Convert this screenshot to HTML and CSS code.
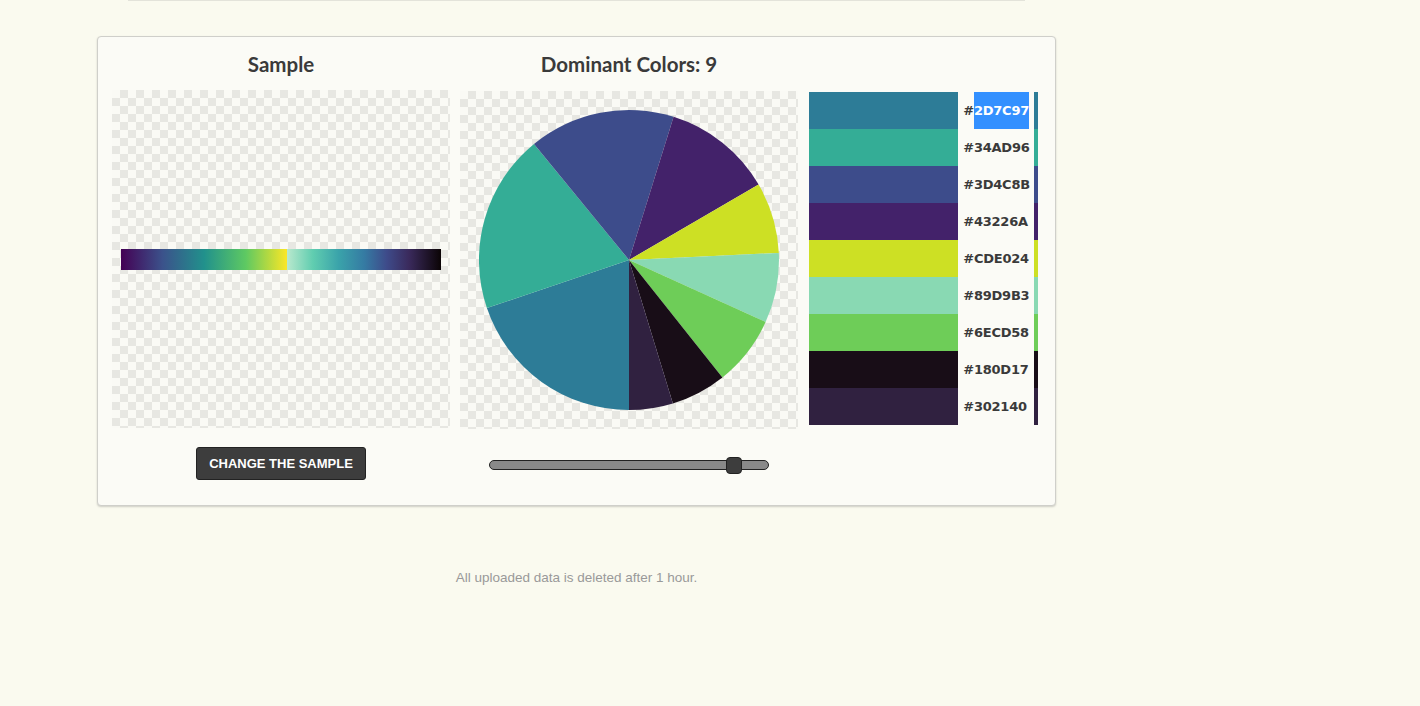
FILE: index.html
```html
<!DOCTYPE html>
<html lang="en">
<head>
<meta charset="utf-8">
<title>Dominant Colors</title>
<link rel="stylesheet" href="styles.css">
</head>
<body>
<div class="topline"></div>
<main class="wrap">
  <section class="card">
    <h2 class="title title-sample">Sample</h2>
    <h2 class="title title-pie">Dominant Colors: 9</h2>

    <div class="checker sample-box"><div class="gradient-bar"></div></div>
    <div class="checker pie-box">
      <svg class="pie" width="338" height="338" viewBox="0 0 338 338">
        <path d="M169,169 L169,319 A150,150 0 0 1 26.9,217.1 Z" fill="#2D7C97"/>
        <path d="M169,169 L26.9,217.1 A150,150 0 0 1 74.0,52.9 Z" fill="#34AD96"/>
        <path d="M169,169 L74.0,52.9 A150,150 0 0 1 213.6,25.8 Z" fill="#3D4C8B"/>
        <path d="M169,169 L213.6,25.8 A150,150 0 0 1 298.6,93.5 Z" fill="#43226A"/>
        <path d="M169,169 L298.6,93.5 A150,150 0 0 1 318.8,161.9 Z" fill="#CDE024"/>
        <path d="M169,169 L318.8,161.9 A150,150 0 0 1 305.6,231.0 Z" fill="#89D9B3"/>
        <path d="M169,169 L305.6,231.0 A150,150 0 0 1 262.4,286.4 Z" fill="#6ECD58"/>
        <path d="M169,169 L262.4,286.4 A150,150 0 0 1 212.9,312.4 Z" fill="#180D17"/>
        <path d="M169,169 L212.9,312.4 A150,150 0 0 1 169,319 Z" fill="#302140"/>
      </svg>
    </div>
    <ul class="palette">
      <li class="row" style="--c:#2D7C97"><span class="sw"></span><span class="code">#<span class="sel">2D7C97</span></span><span class="strip"></span></li>
      <li class="row" style="--c:#34AD96"><span class="sw"></span><span class="code">#34AD96</span><span class="strip"></span></li>
      <li class="row" style="--c:#3D4C8B"><span class="sw"></span><span class="code">#3D4C8B</span><span class="strip"></span></li>
      <li class="row" style="--c:#43226A"><span class="sw"></span><span class="code">#43226A</span><span class="strip"></span></li>
      <li class="row" style="--c:#CDE024"><span class="sw"></span><span class="code">#CDE024</span><span class="strip"></span></li>
      <li class="row" style="--c:#89D9B3"><span class="sw"></span><span class="code">#89D9B3</span><span class="strip"></span></li>
      <li class="row" style="--c:#6ECD58"><span class="sw"></span><span class="code">#6ECD58</span><span class="strip"></span></li>
      <li class="row" style="--c:#180D17"><span class="sw"></span><span class="code">#180D17</span><span class="strip"></span></li>
      <li class="row" style="--c:#302140"><span class="sw"></span><span class="code">#302140</span><span class="strip"></span></li>
    </ul>

    <div class="controls controls-sample">
      <button class="btn" type="button">Change the sample</button>
    </div>
    <div class="controls controls-pie">
      <input class="slider" type="range" min="0" max="10" value="9" aria-label="Number of colors">
    </div>
  </section>
  <p class="note">All uploaded data is deleted after 1 hour.</p>
</main>
</body>
</html>
```

FILE: styles.css
```css
* { box-sizing: border-box; }

html, body {
  margin: 0;
  padding: 0;
  background: #fafaef;
  font-family: "Liberation Sans", Arial, sans-serif;
  color: #333;
}

.topline {
  margin-left: 128px;
  width: 897px;
  height: 1px;
  background: #e3e3da;
}

.wrap {
  margin-left: 97px;
  width: 959px;
  padding-top: 35px;
}

.card {
  display: grid;
  grid-template-columns: 338px 338px 230px;
  grid-template-rows: 53px 338px auto;
  column-gap: 10px;
  background: #fbfbf6;
  border: 1px solid #cfcfca;
  border-radius: 4px;
  box-shadow: 0 1px 2px rgba(0, 0, 0, 0.18);
  padding: 0 15px 25px 14px;
}

.title {
  margin: 0;
  align-self: center;
  text-align: center;
  font-family: Lato, "Open Sans", sans-serif;
  font-weight: 700;
  font-size: 20.5px;
  color: #3a3a3a;
}
.title-sample { grid-column: 1; grid-row: 1; }
.title-pie { grid-column: 2; grid-row: 1; }

.checker {
  width: 338px;
  height: 338px;
  background-color: #fafaf5;
  background-image:
    conic-gradient(#e7e7e2 25%, transparent 0 50%, #e7e7e2 0 75%, transparent 0);
  background-size: 16px 16px;
}

.sample-box {
  grid-column: 1;
  grid-row: 2;
  display: flex;
  align-items: center;
  justify-content: center;
}

.gradient-bar {
  width: 320px;
  height: 21px;
  margin-top: 1px;
  background: linear-gradient(to right,
    #440154 0%,
    #3b528b 13%,
    #21918c 26%,
    #5ec962 39%,
    #fde725 52%,
    #b8e8cd 52%,
    #60cdb0 60%,
    #3aa3aa 68%,
    #357ba3 76%,
    #3e4b8a 83%,
    #3a2a5c 90%,
    #0b0405 100%);
}

.pie-box {
  grid-column: 2;
  grid-row: 2;
  margin-top: 1px;
}
.pie { display: block; }

.palette {
  grid-column: 3;
  grid-row: 2;
  list-style: none;
  margin: 2px 0 0 1px;
  padding: 0;
}

.row {
  display: flex;
  height: 37px;
}
.sw {
  width: 150px;
  background: var(--c);
}
.code {
  width: 76px;
  padding-left: 5px;
  line-height: 37px;
  font-family: "DejaVu Sans", Verdana, sans-serif;
  font-weight: 700;
  font-size: 13px;
  color: #3a3a3a;
  white-space: nowrap;
  letter-spacing: -0.25px;
}
.sel {
  display: inline-block;
  background: #3390ff;
  color: #fff;
}
.strip {
  width: 4px;
  background: var(--c);
}

.controls {
  grid-row: 3;
  display: flex;
  justify-content: center;
  align-items: center;
  padding-top: 19px;
  height: 52px;
}
.controls-sample { grid-column: 1; }
.controls-pie { grid-column: 2; }

.btn {
  width: 170px;
  height: 33px;
  background: #3d3d3d;
  color: #fff;
  border: 1px solid #222;
  border-radius: 3px;
  font-family: "Liberation Sans", Arial, sans-serif;
  font-weight: 700;
  font-size: 13px;
  text-transform: uppercase;
  padding: 0;
}

.slider {
  -webkit-appearance: none;
  appearance: none;
  width: 280px;
  height: 10px;
  margin: 3px 0 0 0;
  background: #898989;
  border: 1px solid #222;
  border-radius: 5px;
}
.slider::-webkit-slider-thumb {
  -webkit-appearance: none;
  appearance: none;
  width: 16px;
  height: 17px;
  background: #3d3d3d;
  border: 1px solid #222;
  border-radius: 4px;
}

.note {
  margin: 64px 0 0 0;
  text-align: center;
  font-family: "Liberation Sans", Arial, sans-serif;
  font-size: 13.5px;
  line-height: 15px;
  color: #999;
}
```
